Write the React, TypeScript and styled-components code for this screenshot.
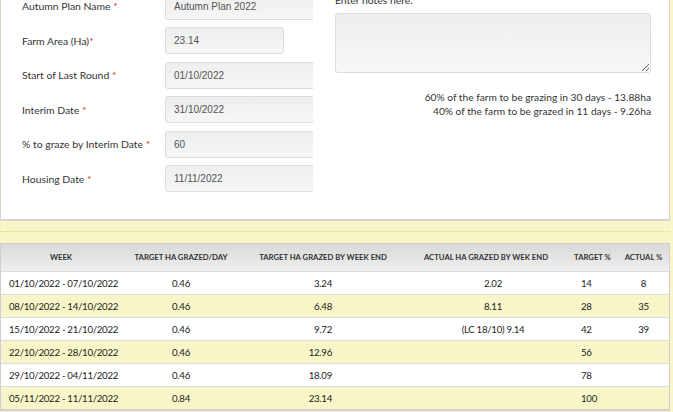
import styled, { createGlobalStyle } from 'styled-components'

type Field = {
	label: string
	value: string
	tight?: boolean
	short?: boolean
}

type Week = {
	week: string
	perDay: string
	target: string
	actual: string
	targetPct: string
	actualPct: string
}

const fields: Field[] = [
	{ label: 'Autumn Plan Name', value: 'Autumn Plan 2022' },
	{ label: 'Farm Area (Ha)', value: '23.14', tight: true, short: true },
	{ label: 'Start of Last Round', value: '01/10/2022' },
	{ label: 'Interim Date', value: '31/10/2022' },
	{ label: '% to graze by Interim Date', value: '60' },
	{ label: 'Housing Date', value: '11/11/2022' },
]

const weeks: Week[] = [
	{ week: '01/10/2022 - 07/10/2022', perDay: '0.46', target: '3.24', actual: '2.02', targetPct: '14', actualPct: '8' },
	{ week: '08/10/2022 - 14/10/2022', perDay: '0.46', target: '6.48', actual: '8.11', targetPct: '28', actualPct: '35' },
	{ week: '15/10/2022 - 21/10/2022', perDay: '0.46', target: '9.72', actual: '(LC 18/10) 9.14', targetPct: '42', actualPct: '39' },
	{ week: '22/10/2022 - 28/10/2022', perDay: '0.46', target: '12.96', actual: '', targetPct: '56', actualPct: '' },
	{ week: '29/10/2022 - 04/11/2022', perDay: '0.46', target: '18.09', actual: '', targetPct: '78', actualPct: '' },
	{ week: '05/11/2022 - 11/11/2022', perDay: '0.84', target: '23.14', actual: '', targetPct: '100', actualPct: '' },
]

const App = (): JSX.Element => {
	return (
		<Page>
			<GlobalStyle />
			<TopPanel>
				<FormColumn>
					{fields.map((f) => (
						<FieldRow key={f.label}>
							<Label>
								{f.label}
								{f.tight ? '' : ' '}
								<Req>*</Req>
							</Label>
							<Input readOnly defaultValue={f.value} short={f.short} />
						</FieldRow>
					))}
				</FormColumn>
				<NotesColumn>
					<NotesLabel>Enter notes here.</NotesLabel>
					<Notes />
					<Summary>
						<div>60% of the farm to be grazing in 30 days - 13.88ha</div>
						<div>40% of the farm to be grazed in 11 days - 9.26ha</div>
					</Summary>
				</NotesColumn>
			</TopPanel>
			<Divider>
				<Dots />
			</Divider>
			<TablePanel>
				<Table>
					<colgroup>
						<col style={{ width: 120 }} />
						<col style={{ width: 120 }} />
						<col style={{ width: 164 }} />
						<col style={{ width: 162 }} />
						<col style={{ width: 51 }} />
						<col />
					</colgroup>
					<thead>
						<tr>
							<Th>Week</Th>
							<Th>Target ha grazed/day</Th>
							<Th>Target ha grazed by week end</Th>
							<Th>Actual ha grazed by wek end</Th>
							<Th>Target %</Th>
							<Th>Actual %</Th>
						</tr>
					</thead>
					<tbody>
						{weeks.map((w, i) => (
							<Row key={w.week} striped={i % 2 === 1}>
								<Td align="left" padL={8}>{w.week}</Td>
								<Td>{w.perDay}</Td>
								<Td align="right" padR={73}>{w.target}</Td>
								<Td padL={14}>{w.actual}</Td>
								<Td align="left" padL={14}>{w.targetPct}</Td>
								<Td>{w.actualPct}</Td>
							</Row>
						))}
					</tbody>
				</Table>
			</TablePanel>
		</Page>
	)
}

export default App

const GlobalStyle = createGlobalStyle`
	html, body {
		margin: 0;
		padding: 0;
		background: #f8f6c8;
		font-family: Lato, 'Open Sans', sans-serif;
		color: #333;
		overflow: hidden;
	}
`

const Page = styled.div`
	width: 670px;
	margin-top: -20px;
`

const TopPanel = styled.div`
	display: flex;
	background: #fff;
	border-left: 1px solid #d6d6c4;
	border-right: 1px solid #d6d6d6;
	border-bottom: 2px solid #d4d4d4;
	padding: 12.5px 0 26.5px;
`

const FormColumn = styled.div`
	width: 291px;
	padding-left: 21px;
	overflow: hidden;
	display: flex;
	flex-direction: column;
	gap: 7.6px;
	flex-shrink: 0;
`

const FieldRow = styled.div`
	display: flex;
	align-items: center;
	height: 27px;
`

const Label = styled.label`
	width: 143px;
	flex-shrink: 0;
	font-size: 10.4px;
	color: #333;
	white-space: nowrap;
`

const Req = styled.span`
	color: #e03030;
`

const Input = styled.input<{ short?: boolean }>`
	box-sizing: border-box;
	flex-shrink: 0;
	width: ${(p) => (p.short ? '119px' : '180px')};
	height: 27px;
	padding: 0 8px;
	border: 1px solid #dcdcdc;
	border-radius: 3px;
	background: linear-gradient(#eeeeee, #f6f6f6);
	font-family: 'Liberation Sans', Arial, sans-serif;
	font-size: 10px;
	color: #555;
	outline: none;
`

const NotesColumn = styled.div`
	flex: 1;
	margin-left: 22px;
	padding-right: 18px;
	display: flex;
	flex-direction: column;
`

const NotesLabel = styled.div`
	font-size: 10.4px;
	line-height: 15px;
`

const Notes = styled.textarea`
	box-sizing: border-box;
	margin-top: 5.5px;
	height: 60px;
	width: 100%;
	border: 1px solid #dcdcdc;
	border-radius: 3px;
	background: linear-gradient(#eeeeee, #f7f7f7);
	resize: vertical;
	outline: none;
`

const Summary = styled.div`
	margin-top: 17px;
	text-align: right;
	font-size: 10.2px;
	line-height: 14px;
	color: #333;
`

const Divider = styled.div`
	height: 22px;
	display: flex;
	align-items: center;
`

const Dots = styled.div`
	width: 100%;
	border-top: 1px dotted #e2d676;
`

const TablePanel = styled.div`
	border: 1px solid #cfcfcf;
	border-bottom-width: 2px;
	background: #fff;
`

const Table = styled.table`
	width: 100%;
	border-collapse: collapse;
	table-layout: fixed;
`

const Th = styled.th`
	height: 27px;
	padding: 0;
	background: linear-gradient(#d9d9d9, #efefef);
	font-size: 7.7px;
	font-weight: 700;
	text-transform: uppercase;
	color: #333;
	text-align: center;
	white-space: nowrap;
`

const Row = styled.tr<{ striped: boolean }>`
	background: ${(p) => (p.striped ? '#f8f6c8' : '#fff')};
`

const Td = styled.td<{ align?: 'left' | 'right' | 'center'; padL?: number; padR?: number }>`
	height: 22px;
	padding: 0 ${(p) => p.padR ?? 0}px 0 ${(p) => p.padL ?? 0}px;
	border-top: 1px solid #dcdcdc;
	text-align: ${(p) => p.align ?? 'center'};
	font-size: 9.7px;
	letter-spacing: -0.3px;
	color: #222;
	white-space: nowrap;
`
